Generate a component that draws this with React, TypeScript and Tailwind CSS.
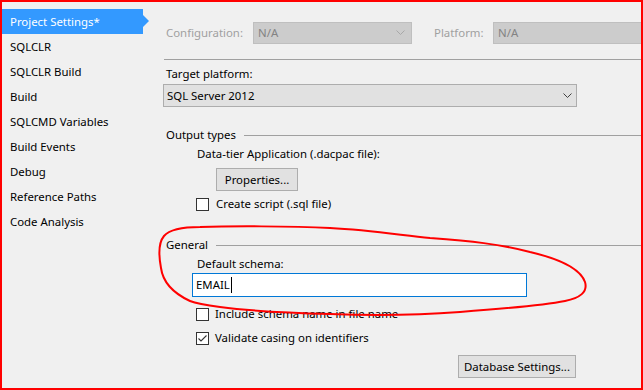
import React from "react";

const Chevron = ({ color = "#404040" }: { color?: string }) => (
  <svg width="9" height="6" viewBox="0 0 9 6" className="shrink-0">
    <path d="M0.5 0.5 L4.5 4.5 L8.5 0.5" fill="none" stroke={color} strokeWidth="1" />
  </svg>
);

const Checkbox = ({ checked = false }: { checked?: boolean }) => (
  <div className="w-[13px] h-[13px] border border-[#333333] bg-white flex items-center justify-center shrink-0">
    {checked && (
      <svg width="11" height="11" viewBox="0 0 11 11">
        <path d="M1.5 5.5 L4 8 L9.5 2.5" fill="none" stroke="#333333" strokeWidth="1.1" />
      </svg>
    )}
  </div>
);

const navItems = [
  "SQLCLR",
  "SQLCLR Build",
  "Build",
  "SQLCMD Variables",
  "Build Events",
  "Debug",
  "Reference Paths",
  "Code Analysis",
];

export default function App() {
  return (
    <div className="relative w-[643px] h-[390px] border-2 border-[#ff0000] bg-[#f0f0f0] overflow-hidden font-['Segoe_UI','Noto_Sans',sans-serif] text-[11.4px] leading-[16px] text-black flex">
      {/* Sidebar */}
      <div className="w-[141px] shrink-0 pt-[7px] flex flex-col">
        <div className="relative h-[25px] bg-[#3399ff] text-white flex items-center pl-[8px]">
          Project Settings*
          <div className="absolute right-[-6px] top-[6px] w-0 h-0 border-y-[6px] border-y-transparent border-l-[6px] border-l-[#3399ff]" />
        </div>
        {navItems.map((n) => (
          <div key={n} className="h-[25px] flex items-center pl-[8px]">
            {n}
          </div>
        ))}
      </div>

      {/* Main panel */}
      <div className="flex-1 min-w-0 pl-[20px] flex flex-col overflow-hidden">
        <div className="mt-[20px] h-[22px] flex items-center">
          <span className="ml-[3px] w-[87px] shrink-0 text-[#a0a0a0]">Configuration:</span>
          <div className="w-[159px] h-[22px] shrink-0 bg-[#cccccc] border border-[#bfbfbf] flex items-center justify-between pl-[4px] pr-[6px] text-[#838383]">
            N/A
            <Chevron color="#a8a8a8" />
          </div>
          <span className="ml-[22px] w-[59px] shrink-0 text-[#a0a0a0]">Platform:</span>
          <div className="w-[160px] h-[22px] shrink-0 bg-[#cccccc] border border-[#bfbfbf] flex items-center pl-[4px] text-[#838383]">
            N/A
          </div>
        </div>

        <div className="mt-[15px] ml-[1px] h-px bg-[#a0a0a0]" />

        <div className="mt-[6px] h-[16px] pl-[3px]">Target platform:</div>

        <div className="mt-[2px] w-[414px] h-[23px] bg-[#e1e1e1] border border-[#adadad] flex items-center justify-between pl-[3px] pr-[4px]">
          SQL Server 2012
          <Chevron />
        </div>

        <div className="mt-[20px] h-[16px] flex items-center pl-[3px]">
          <span>Output types</span>
          <div className="ml-[8px] flex-1 h-px bg-[#a0a0a0]" />
        </div>

        <div className="mt-[3px] h-[16px] pl-[34px]">Data-tier Application (.dacpac file):</div>

        <div className="mt-[6px] ml-[53px] w-[82px] h-[23px] bg-[#e1e1e1] border border-[#adadad] flex items-center justify-center">
          Properties...
        </div>

        <div className="mt-[6px] ml-[33px] h-[14px] flex items-center gap-[7px]">
          <Checkbox />
          <span>Create script (.sql file)</span>
        </div>

        <div className="mt-[26px] h-[16px] flex items-center pl-[3px]">
          <span>General</span>
          <div className="ml-[8px] flex-1 h-px bg-[#a0a0a0]" />
        </div>

        <div className="mt-[3px] h-[16px] pl-[34px]">Default schema:</div>

        <div className="mt-[1px] ml-[29px] w-[335px] h-[24px] bg-white border border-[#0078d7] flex items-center pl-[3px]">
          EMAIL
          <span className="ml-[1px] w-px h-[16px] bg-black" />
        </div>

        <div className="mt-[10px] ml-[33px] h-[14px] flex items-center gap-[6px]">
          <Checkbox />
          <span>Include schema name in file name</span>
        </div>

        <div className="mt-[10px] ml-[33px] h-[14px] flex items-center gap-[6px]">
          <Checkbox checked />
          <span>Validate casing on identifiers</span>
        </div>

        <div className="mt-[10px] ml-[295px] w-[118px] h-[23px] bg-[#e1e1e1] border border-[#adadad] flex items-center justify-center">
          Database Settings...
        </div>
      </div>

      {/* Hand-drawn annotation */}
      <svg className="absolute left-[-2px] top-[-2px] pointer-events-none" width="643" height="390" viewBox="0 0 643 390">
        <path
          d="M190 301 C175 294 163 283 161 268 C158 252 159 242 164 236 C170 229 185 227 200 227 C230 226 290 226 330 228 C370 230 400 235 430 238 C470 241 500 244 530 252 C560 259 580 268 585 282 C588 292 580 298 565 301 C540 306 500 309 460 312 C420 315 380 316 330 314 C290 313 250 311 220 307 C205 305 195 303 190 301"
          fill="none"
          stroke="#ff0000"
          strokeWidth="2"
          strokeLinecap="round"
        />
      </svg>
    </div>
  );
}
